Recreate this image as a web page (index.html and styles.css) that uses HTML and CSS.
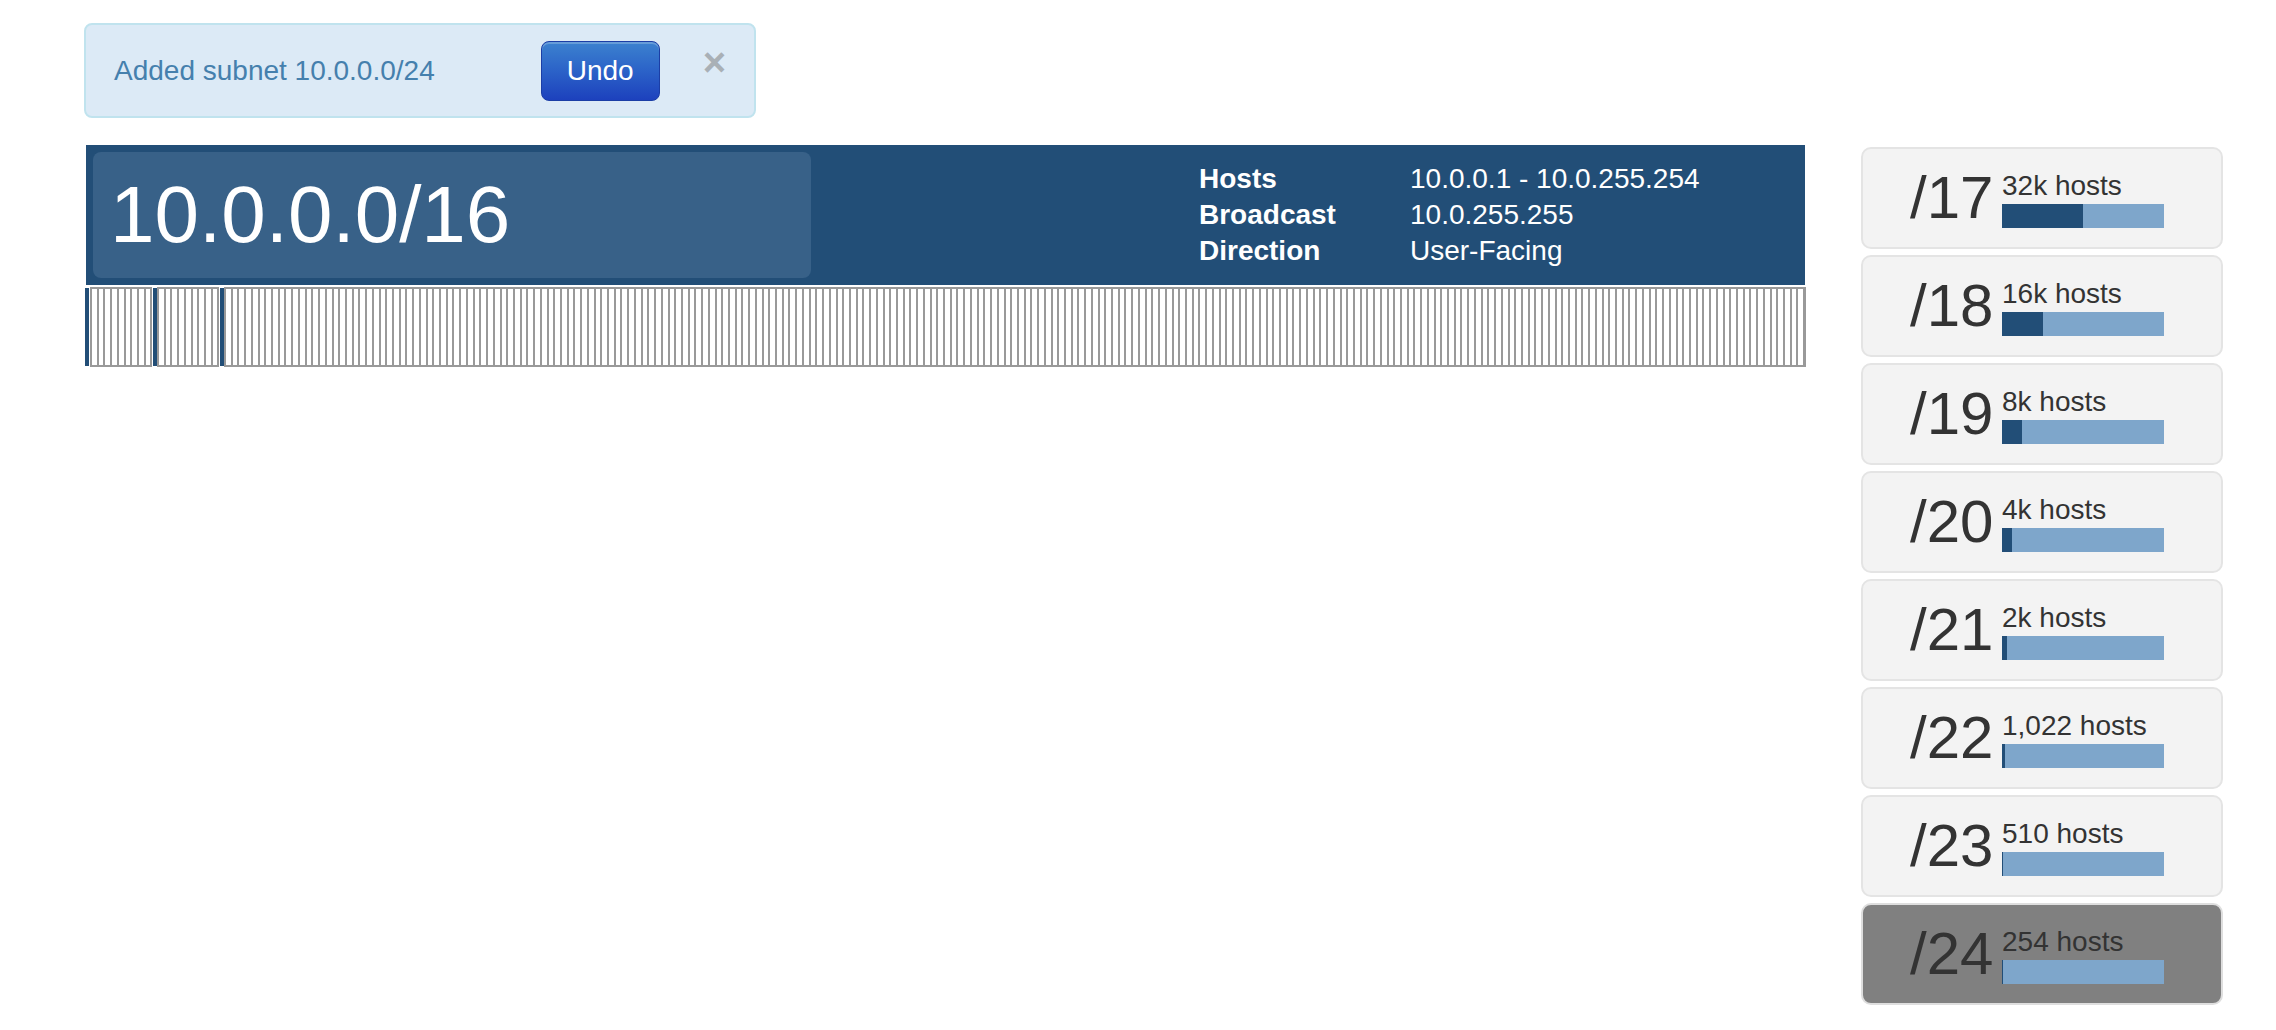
FILE: index.html
```html
<!DOCTYPE html>
<html lang="en">
<head>
<meta charset="utf-8">
<title>Subnet 10.0.0.0/16</title>
<link rel="stylesheet" href="styles.css">
</head>
<body>
<div class="page">
  <div class="alert">
    <span class="alert-text">Added subnet 10.0.0.0/24</span>
    <button class="btn-undo" type="button">Undo</button>
    <span class="close">&times;</span>
  </div>

  <div class="layout">
    <div class="main">
      <div class="net-header">
        <div class="cidr">10.0.0.0/16</div>
        <div class="details">
          <div class="lbl">Hosts</div><div class="val">10.0.0.1 - 10.0.255.254</div>
          <div class="lbl">Broadcast</div><div class="val">10.0.255.255</div>
          <div class="lbl">Direction</div><div class="val">User-Facing</div>
        </div>
      </div>
      <div class="bitmap">
        <span class="mark first"></span>
        <span class="seg short"></span>
        <span class="mark"></span>
        <span class="seg short"></span>
        <span class="mark"></span>
        <span class="seg rest"></span>
      </div>
    </div>

    <div class="sidebar">
      <div class="size-card">
        <div class="num">/17</div>
        <div class="info"><div class="hosts">32k hosts</div><div class="bar"><div class="fill" style="width:50%"></div></div></div>
      </div>
      <div class="size-card">
        <div class="num">/18</div>
        <div class="info"><div class="hosts">16k hosts</div><div class="bar"><div class="fill" style="width:25%"></div></div></div>
      </div>
      <div class="size-card">
        <div class="num">/19</div>
        <div class="info"><div class="hosts">8k hosts</div><div class="bar"><div class="fill" style="width:12.5%"></div></div></div>
      </div>
      <div class="size-card">
        <div class="num">/20</div>
        <div class="info"><div class="hosts">4k hosts</div><div class="bar"><div class="fill" style="width:6.25%"></div></div></div>
      </div>
      <div class="size-card">
        <div class="num">/21</div>
        <div class="info"><div class="hosts">2k hosts</div><div class="bar"><div class="fill" style="width:3.125%"></div></div></div>
      </div>
      <div class="size-card">
        <div class="num">/22</div>
        <div class="info"><div class="hosts">1,022 hosts</div><div class="bar"><div class="fill" style="width:1.5625%"></div></div></div>
      </div>
      <div class="size-card">
        <div class="num">/23</div>
        <div class="info"><div class="hosts">510 hosts</div><div class="bar"><div class="fill" style="width:0.78%"></div></div></div>
      </div>
      <div class="size-card active">
        <div class="num">/24</div>
        <div class="info"><div class="hosts">254 hosts</div><div class="bar"><div class="fill" style="width:0.6%"></div></div></div>
      </div>
    </div>
  </div>
</div>
</body>
</html>
```

FILE: styles.css
```css
* { box-sizing: border-box; }

html, body {
  margin: 0;
  padding: 0;
  background: #fff;
}

body {
  font-family: "Liberation Sans", Arial, Helvetica, sans-serif;
  color: #333;
}

.page {
  padding: 23px 53px 0 84px;
}

/* ---------- alert ---------- */
.alert {
  display: flex;
  align-items: center;
  width: fit-content;
  padding: 16px 28px 15px 28px;
  background: #dceaf6;
  border: 2px solid #c0e3ee;
  border-radius: 8px;
  color: #4580ad;
}

.alert-text {
  font-size: 28px;
  line-height: 40px;
}

.btn-undo {
  margin-left: 106px;
  height: 60px;
  padding: 0 25px;
  font-family: "Liberation Sans", Arial, sans-serif;
  font-size: 28px;
  color: #fff;
  background: linear-gradient(to bottom, #3c82cf 0%, #2b62c8 50%, #1d41bd 100%);
  border: 1px solid #1b3ea6;
  border-radius: 8px;
  box-shadow: inset 0 2px 0 rgba(255, 255, 255, 0.22);
  cursor: pointer;
}

.close {
  margin-left: 43px;
  font-size: 40px;
  font-weight: bold;
  line-height: 40px;
  color: #a9b0b6;
  transform: translateY(-9px);
  cursor: pointer;
}

/* ---------- layout ---------- */
.layout {
  display: flex;
  align-items: flex-start;
  margin-top: 27px;
}

.main {
  width: 1721px;
  margin-left: 1px;
}

.sidebar {
  width: 362px;
  margin-left: 55px;
  margin-top: 2px;
}

/* ---------- network header ---------- */
.net-header {
  display: flex;
  align-items: center;
  height: 140px;
  margin-left: 1px;
  margin-right: 1px;
  padding: 0 8px 0 7px;
  background: #224e77;
  color: #fff;
}

.cidr {
  width: 718px;
  height: 126px;
  padding-left: 17px;
  background: #386188;
  border-radius: 8px;
  font-size: 80px;
  line-height: 126px;
  color: #fff;
}

.details {
  display: grid;
  grid-template-columns: 211px auto;
  margin-left: 388px;
  font-size: 28px;
  line-height: 36px;
}

.lbl {
  font-weight: bold;
}

/* ---------- bitmap ---------- */
.bitmap {
  display: flex;
  height: 80px;
  margin-top: 2px;
}

.mark {
  width: 4px;
  height: 78px;
  margin-top: 1px;
  margin-left: 1px;
  background: #224e77;
}

.mark.first {
  margin-left: 0;
  margin-right: 1px;
}

.seg {
  height: 80px;
  border: 2px solid #999;
  background-color: #fff;
  background-image: repeating-linear-gradient(to right, #999 0, #999 2px, #fff 2px, #fff 6.72px);
  background-origin: border-box;
}

.seg.short {
  width: 62px;
}

.seg.rest {
  flex: 1;
}

/* ---------- prefix cards ---------- */
.size-card {
  display: flex;
  align-items: center;
  height: 102px;
  margin-bottom: 6px;
  padding-left: 47px;
  background: #f3f3f3;
  border: 2px solid #e4e4e4;
  border-radius: 10px;
}

.size-card.active {
  background: #808080;
  border-color: #dedede;
}

.num {
  width: 92px;
  font-size: 60px;
  line-height: 60px;
  color: #333;
}

.info {
  width: 162px;
  padding-top: 3px;
}

.hosts {
  font-size: 28px;
  line-height: 30px;
  color: #333;
  white-space: nowrap;
}

.bar {
  height: 24px;
  margin-top: 3px;
  background: #7ea6cb;
}

.fill {
  height: 100%;
  background: #224e77;
}
```
